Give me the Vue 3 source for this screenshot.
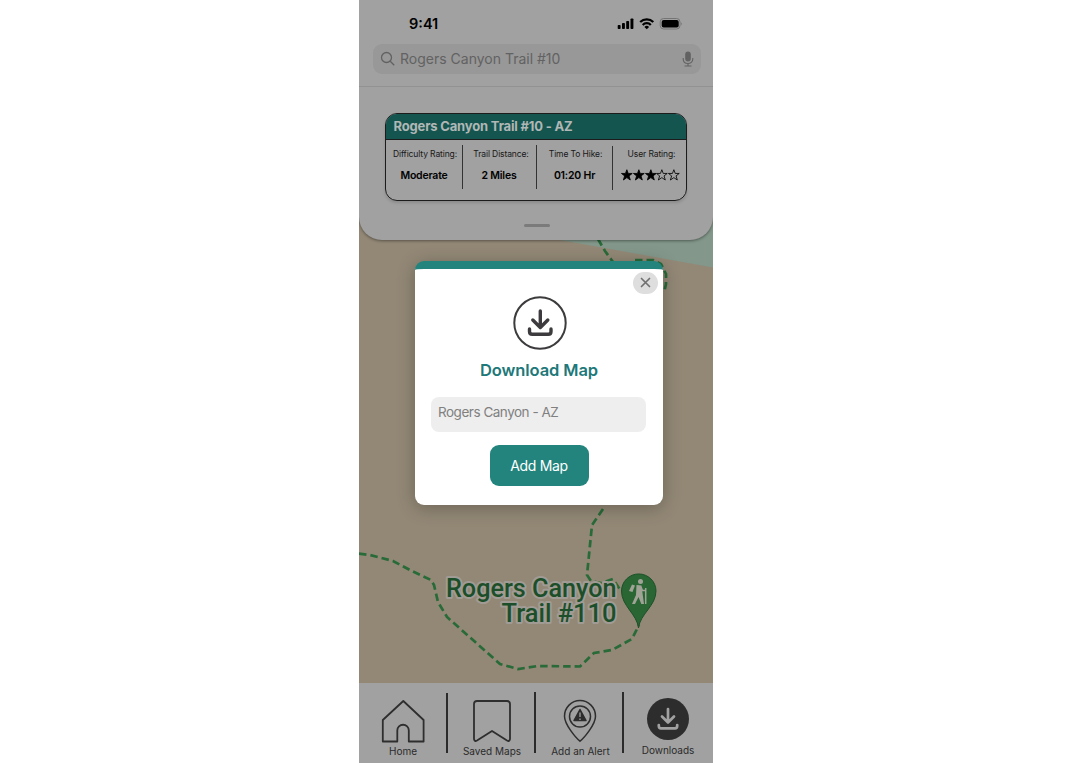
<script setup>
const stats = [
  { id: 'difficulty', label: 'Difficulty Rating:', value: 'Moderate' },
  { id: 'distance', label: 'Trail Distance:', value: '2 Miles' },
  { id: 'time', label: 'Time To Hike:', value: '01:20 Hr' },
  { id: 'rating', label: 'User Rating:', stars: 3 },
]
</script>

<template>
  <main class="phone">
    <section class="map">
      <svg width="354" height="683" viewBox="359 0 354 683">
        <rect x="359" width="354" height="683" fill="#938876" />
        <path d="M359 200H713V267.500L560 240Z" fill="#83978a" />
        <g fill="none" stroke="#286b38" stroke-width="2.700" stroke-dasharray="7.500 4">
          <path d="M598 239L605 251L613 262" />
          <path d="M635 260H653L661 264L666 274V284L664 293" />
          <path d="M603 509L592 525L590 545L587 575L591 581L601 583L613 579L621 591" />
          <path d="M359 553.700L370 555L393 561L410 570L431 580L434 585L438 602L447 617L500 664L518 669L538 666L580 666.500L594 653L612 650L632 639L639 625" />
        </g>
        <g class="place" text-anchor="end">
          <text x="616.500" y="597" textLength="170.500" lengthAdjust="spacingAndGlyphs">Rogers Canyon</text>
          <text x="616.500" y="622" textLength="115" lengthAdjust="spacingAndGlyphs">Trail #110</text>
        </g>
        <path d="M638.500 628C637 614 621.500 606 621.500 591A17.200 17 0 0 1 656 591C656 606 640 614 638.500 628Z" fill="#296634" stroke="#1c5028" />
        <g fill="#a1a397" stroke="#a1a397">
          <circle cx="640.500" cy="581.500" r="2.500" stroke="none" />
          <path d="M636.500 585L641.500 585.500L642.500 593L644 604H641.300L638.500 597L635 604H632L636 595Z" stroke="none" />
          <path d="M641 587L642.500 590.500H645.500M645.700 588V604" fill="none" stroke-width="1.500" />
          <path d="M632 584.500L635 585.500L632.500 592L629 591Z" stroke="none" />
        </g>
      </svg>
    </section>

    <header class="sheet">
      <div class="status">
        <span class="clock">9:41</span>
        <svg class="signals" width="68" height="14" viewBox="0 0 68 14">
          <g fill="#000">
            <rect x=".7" y="8" width="2.900" height="4" rx=".8" />
            <rect x="5" y="6" width="2.900" height="6" rx=".8" />
            <rect x="9.200" y="4" width="2.900" height="8" rx=".8" />
            <rect x="13.500" y="1.500" width="2.900" height="10.500" rx=".8" />
          </g>
          <g fill="none" stroke="#000" stroke-width="2.200">
            <path d="M23.200 5.100A9.200 9.200 0 0 1 36.300 5.100" />
            <path d="M25.700 8A5.500 5.500 0 0 1 33.800 8" />
          </g>
          <path d="M29.750 12.300L27.400 10A3.300 3.300 0 0 1 32.100 10Z" />
          <rect x="43.200" y="1.500" width="19.800" height="10.500" rx="3.400" fill="none" stroke="#747474" />
          <rect x="44.700" y="3" width="17" height="7.500" rx="2" />
          <path d="M64.200 5.200V8.500Q66 6.800 64.200 5.200" fill="#747474" />
        </svg>
      </div>
      <div class="search">
        <svg width="16" height="16" viewBox="0 0 16 16" fill="none" stroke="#626262" stroke-width="1.300">
          <circle cx="6.500" cy="6.500" r="5" /><path d="M10.200 10.200L14.200 14.200" />
        </svg>
        <span>Rogers Canyon Trail #10</span>
        <svg class="mic" width="12" height="17" viewBox="0 0 12 17" fill="none" stroke="#626262" stroke-width="1.100">
          <rect x="3.800" y="1" width="4.400" height="9" rx="2.200" fill="#626262" />
          <path d="M1.200 7V8C1.200 14 10.800 14 10.800 8V7M6 12.500V15M2.500 15H9.500" />
        </svg>
      </div>
      <div class="rule"></div>

      <article class="trail">
        <h2>Rogers Canyon Trail #10 - AZ</h2>
        <div class="stats">
          <div v-for="s in stats" :key="s.id" class="stat" :class="s.id">
            <span class="label">{{ s.label }}</span>
            <b v-if="s.value">{{ s.value }}</b>
            <span v-else class="stars">
              <svg v-for="n in 5" :key="n" width="11.700" height="12" viewBox="1.500 1.500 21 21">
                <path d="M12 2.500L14.500 9.200H21.700L16 13.600L18.200 21L12 16.700L5.800 21L8 13.600L2.300 9.200H9.500Z" :fill="n <= s.stars ? '#000' : 'none'" stroke="#000" stroke-width="1.500" />
              </svg>
            </span>
          </div>
        </div>
      </article>
      <div class="grabber"></div>
    </header>

    <nav class="tabs">
      <a class="tab home">
        <svg width="44" height="44" viewBox="0 0 44 44" fill="none" stroke="#2e2e2e" stroke-width="1.800" stroke-linejoin="round">
          <path d="M1.800 21L22.300 2L42.600 21V42.500H27.800V31.500A5.700 5.700 0 0 0 16.300 31.500V42.500H1.800Z" />
        </svg>
        <span>Home</span>
      </a>
      <a class="tab saved">
        <svg width="44" height="44" viewBox="0 0 44 44" fill="none" stroke="#2e2e2e" stroke-width="1.800" stroke-linejoin="round">
          <path d="M7 2H37Q40 2 40 5V40Q39.500 43 37 41.500L22 32L7 41.500Q4.500 43 4 40V5Q4 2 7 2Z" />
        </svg>
        <span>Saved Maps</span>
      </a>
      <a class="tab alert">
        <svg width="44" height="44" viewBox="0 0 44 44" fill="none" stroke="#2e2e2e" stroke-width="1.500">
          <path d="M22 42.200C18 39 6.500 25.500 6.500 17.200A15.500 15.700 0 0 1 37.500 17.200C37.500 25.500 26 39 22 42.200Z" />
          <circle cx="22" cy="17.500" r="10.500" />
          <path d="M22 10.500L28 21.500H16Z" fill="#2e2e2e" stroke-linejoin="round" />
          <path d="M22 13.500V18M22 19.500V21" stroke="#a1a1a1" stroke-width="1.300" />
        </svg>
        <span>Add an Alert</span>
      </a>
      <a class="tab downloads">
        <svg width="44" height="44" viewBox="0 0 44 44" fill="none" stroke="#a1a1a1" stroke-width="2.700" stroke-linecap="round" stroke-linejoin="round">
          <circle cx="22" cy="22" r="21" fill="#2d2d2d" stroke="none" />
          <path d="M22 12V25M16 19.500L22 25.500L28 19.500M12.800 28V29Q12.800 31.300 15 31.300H29Q31.200 31.300 31.200 29V28" />
        </svg>
        <span>Downloads</span>
      </a>
    </nav>

    <div class="modal">
      <button class="close">
        <svg width="11" height="11" viewBox="0 0 11 11" stroke="#717171" stroke-width="1.700" stroke-linecap="round"><path d="M1.500 1.500L9.500 9.500M9.500 1.500L1.500 9.500" /></svg>
      </button>
      <svg class="badge" width="54" height="54" viewBox="0 0 54 54" fill="none" stroke="#3d3b3d">
        <circle cx="27" cy="27" r="25.700" stroke-width="2" />
        <path d="M27.300 15V31M19.800 24L27.300 31.500L34.800 24M16.500 33V35.500Q16.500 38.300 19.300 38.300H35.300Q38 38.300 38 35.500V33" stroke-width="3.400" stroke-linecap="round" stroke-linejoin="round" />
      </svg>
      <h1>Download Map</h1>
      <div class="field">Rogers Canyon - AZ</div>
      <button class="add">Add Map</button>
    </div>
  </main>
</template>

<style scoped>
* { box-sizing: border-box; }
.phone {
  position: relative; width: 354px; height: 763px; margin-left: 359px; overflow: hidden;
  display: flex; flex-direction: column; justify-content: space-between;
  font-family: Inter, "Liberation Sans", sans-serif; background: #a1a1a1;
}
.map { position: absolute; inset: 0 0 80px; }
.map svg { display: block; }
.place { font: 500 26px Roboto, sans-serif; fill: #1c4f29; stroke: #a09c95; stroke-width: 4px; stroke-linejoin: round; paint-order: stroke; }
.sheet {
  position: relative; height: 240px; background: #a1a1a1; border-radius: 0 0 23px 23px;
  box-shadow: 0 1px 3px #0006; display: flex; flex-direction: column;
}
.status { height: 44px; flex: none; display: flex; justify-content: space-between; padding: 15px 28px 0 50px; }
.clock { font-size: 14.5px; line-height: 17px; font-weight: 600; }
.signals { margin-top: 2px; }
.search {
  height: 30px; flex: none; margin: 0 12px 0 14px; padding: 0 7px 0 7px; border-radius: 9px; background: #989898;
  display: flex; align-items: center; gap: 4px; color: #626262; font-size: 14px; line-height: 30px;
}
.search span { flex: 1; }
.rule { height: 1px; flex: none; margin-top: 12px; background: #929292; }
.trail {
  width: 302px; height: 88px; flex: none; margin: 26px 0 0 26px; border: 1px solid #1c1c1c; border-radius: 12px;
  overflow: hidden; box-shadow: 0 2px 3px #0002;
}
.trail h2 {
  margin: 0; height: 26px; padding-left: 7.5px; border-bottom: 1px solid #1c1c1c; background: #155550;
  color: #b0b7b5; font-size: 13px; line-height: 25px; font-weight: 700; letter-spacing: -.17px;
}
.stats { display: grid; grid-template-columns: 77px 74px 76px 73px; padding-top: 5px; }
.stat { height: 44px; border-right: 1.5px solid #333; display: flex; flex-direction: column; align-items: center; color: #000; white-space: nowrap; }
.label { height: 10px; line-height: 10px; margin: 4px 0 0 2px; font-size: 8.5px; letter-spacing: -.11px; color: #181818; }
.stat b { margin-top: 10px; font-size: 10.5px; line-height: 14px; font-weight: 600; letter-spacing: -.2px; }
.distance .label { margin: 4px 0 0 3px; }
.distance b { margin-left: -1px; }
.time { margin-top: 1px; }
.time .label { margin-top: 3px; }
.rating { border: 0; padding-left: 4px; }
.rating .label { margin: 4px 0 0; }
.stars { display: flex; margin: 10px 0 0 -2px; }
.stars svg { display: block; }
.grabber { width: 26px; height: 3px; margin: 23px 0 0 165px; border-radius: 2px; background: #7b7b7b; }
.tabs { position: relative; height: 80px; background: #a1a1a1; display: grid; grid-template-columns: 89px 88px 88px 89px; padding-top: 9px; }
.tab { height: 61px; border-right: 2px solid #2b2b2b; display: flex; flex-direction: column; align-items: center; font-size: 10px; line-height: 12px; color: #2b2b2b; white-space: nowrap; }
.tab svg { display: block; flex: none; margin: 7px 0 2px; }
.home { margin-top: 1px; height: 60px; padding-left: 1px; }
.home svg { margin-top: 6px; }
.alert { padding-left: 3px; }
.alert svg { margin-left: -2px; }
.saved { padding-left: 2px; }
.downloads { border: 0; padding-right: 1px; }
.downloads svg { margin: 5px 1px 3px 0; }
.modal {
  position: absolute; left: 56px; top: 261px; width: 248px; height: 244px; border-top: 8px solid #22847d;
  border-radius: 9px; background: #fff; box-shadow: 0 3px 18px #0004;
  display: flex; flex-direction: column; align-items: center; padding-top: 27px;
}
button { border: 0; padding: 0; font-family: inherit; }
.close { position: absolute; right: 5.5px; top: 2.5px; width: 25px; height: 22px; border-radius: 11px; background: #dedede; display: grid; place-items: center; }
.badge { flex: none; margin-left: 2px; }
h1 { margin: 8px 0 0; font-size: 16.5px; line-height: 24px; font-weight: 600; letter-spacing: -.08px; color: #207879; }
.field { width: 215px; height: 35px; flex: none; margin: 15px 0 0 -1px; padding: 0 7px; border-radius: 8px; background: #eee; color: #808080; font-size: 13.5px; line-height: 30px; letter-spacing: -.48px; }
.add { width: 99px; height: 41px; flex: none; margin-top: 13px; border-radius: 9px; background: #22847d; color: #fff; font-size: 14px; line-height: 41px; letter-spacing: -.35px; }
</style>

<style>
body { background: #fff; }
</style>
